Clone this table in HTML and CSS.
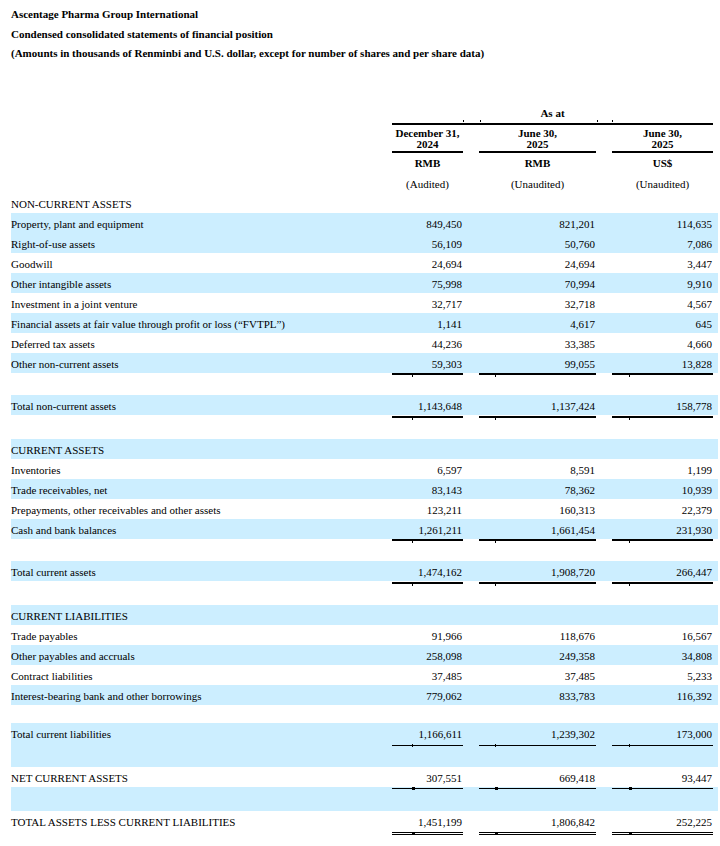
FILE: index.html
```html
<!DOCTYPE html>
<html lang="en">
<head>
<meta charset="utf-8">
<title>Condensed consolidated statements of financial position</title>
<link rel="stylesheet" href="styles.css">
</head>
<body>
<div class="page">
  <div class="title">Ascentage Pharma Group International</div>
  <div class="title">Condensed consolidated statements of financial position</div>
  <div class="title">(Amounts in thousands of Renminbi and U.S. dollar, except for number of shares and per share data)</div>

  <div class="table">
    <div class="grid hrow1"><div class="asat">As at</div></div>
    <div class="grid hrow2">
      <div class="hd c1">December 31,<br>2024</div>
      <div class="hd c2">June 30,<br>2025</div>
      <div class="hd c3">June 30,<br>2025</div>
    </div>
    <div class="grid hrow3">
      <div class="c1">RMB</div><div class="c2">RMB</div><div class="c3">US$</div>
    </div>
    <div class="grid hrow4">
      <div class="c1">(Audited)</div><div class="c2">(Unaudited)</div><div class="c3">(Unaudited)</div>
    </div>

    <div class="grid row"><span class="lbl">NON-CURRENT ASSETS</span></div>
    <div class="grid row b"><span class="lbl">Property, plant and equipment</span><span class="n1">849,450</span><span class="n2">821,201</span><span class="n3">114,635</span></div>
    <div class="grid row b"><span class="lbl">Right-of-use assets</span><span class="n1">56,109</span><span class="n2">50,760</span><span class="n3">7,086</span></div>
    <div class="grid row"><span class="lbl">Goodwill</span><span class="n1">24,694</span><span class="n2">24,694</span><span class="n3">3,447</span></div>
    <div class="grid row b"><span class="lbl">Other intangible assets</span><span class="n1">75,998</span><span class="n2">70,994</span><span class="n3">9,910</span></div>
    <div class="grid row"><span class="lbl">Investment in a joint venture</span><span class="n1">32,717</span><span class="n2">32,718</span><span class="n3">4,567</span></div>
    <div class="grid row b"><span class="lbl">Financial assets at fair value through profit or loss (“FVTPL”)</span><span class="n1">1,141</span><span class="n2">4,617</span><span class="n3">645</span></div>
    <div class="grid row"><span class="lbl">Deferred tax assets</span><span class="n1">44,236</span><span class="n2">33,385</span><span class="n3">4,660</span></div>
    <div class="grid row b"><span class="lbl">Other non-current assets</span><span class="n1">59,303</span><span class="n2">99,055</span><span class="n3">13,828</span></div>
    <div class="grid rule thick"><span class="r1"></span><span class="r2"></span><span class="r3"></span></div>
    <div class="spacer s20"></div>
    <div class="grid row b"><span class="lbl">Total non-current assets</span><span class="n1">1,143,648</span><span class="n2">1,137,424</span><span class="n3">158,778</span></div>
    <div class="grid rule thick gap1"><span class="r1"></span><span class="r2"></span><span class="r3"></span></div>
    <div class="spacer s21"></div>

    <div class="grid row b"><span class="lbl">CURRENT ASSETS</span></div>
    <div class="grid row"><span class="lbl">Inventories</span><span class="n1">6,597</span><span class="n2">8,591</span><span class="n3">1,199</span></div>
    <div class="grid row b"><span class="lbl">Trade receivables, net</span><span class="n1">83,143</span><span class="n2">78,362</span><span class="n3">10,939</span></div>
    <div class="grid row"><span class="lbl">Prepayments, other receivables and other assets</span><span class="n1">123,211</span><span class="n2">160,313</span><span class="n3">22,379</span></div>
    <div class="grid row b"><span class="lbl">Cash and bank balances</span><span class="n1">1,261,211</span><span class="n2">1,661,454</span><span class="n3">231,930</span></div>
    <div class="grid rule thick"><span class="r1"></span><span class="r2"></span><span class="r3"></span></div>
    <div class="spacer s20"></div>
    <div class="grid row b"><span class="lbl">Total current assets</span><span class="n1">1,474,162</span><span class="n2">1,908,720</span><span class="n3">266,447</span></div>
    <div class="grid rule thick gap1"><span class="r1"></span><span class="r2"></span><span class="r3"></span></div>
    <div class="spacer s21"></div>

    <div class="grid row b"><span class="lbl">CURRENT LIABILITIES</span></div>
    <div class="grid row"><span class="lbl">Trade payables</span><span class="n1">91,966</span><span class="n2">118,676</span><span class="n3">16,567</span></div>
    <div class="grid row b"><span class="lbl">Other payables and accruals</span><span class="n1">258,098</span><span class="n2">249,358</span><span class="n3">34,808</span></div>
    <div class="grid row"><span class="lbl">Contract liabilities</span><span class="n1">37,485</span><span class="n2">37,485</span><span class="n3">5,233</span></div>
    <div class="grid row b"><span class="lbl">Interest-bearing bank and other borrowings</span><span class="n1">779,062</span><span class="n2">833,783</span><span class="n3">116,392</span></div>
    <div class="spacer s18"></div>
    <div class="grid row b"><span class="lbl">Total current liabilities</span><span class="n1">1,166,611</span><span class="n2">1,239,302</span><span class="n3">173,000</span></div>
    <div class="grid rule thin band"><span class="r1"></span><span class="r2"></span><span class="r3"></span></div>
    <div class="grid row"><span class="lbl">NET CURRENT ASSETS</span><span class="n1">307,551</span><span class="n2">669,418</span><span class="n3">93,447</span></div>
    <div class="grid rule net band"><span class="r1"></span><span class="r2"></span><span class="r3"></span></div>
    <div class="grid row"><span class="lbl">TOTAL ASSETS LESS CURRENT LIABILITIES</span><span class="n1">1,451,199</span><span class="n2">1,806,842</span><span class="n3">252,225</span></div>
    <div class="grid rule dbl"><span class="r1"></span><span class="r2"></span><span class="r3"></span></div>
  </div>
</div>
</body>
</html>
```

FILE: styles.css
```css
html, body {
  margin: 0;
  padding: 0;
  background: #ffffff;
}

body {
  font-family: "Liberation Serif", "Times New Roman", serif;
  font-size: 11px;
  color: #000000;
}

.page {
  padding: 5px 0 0 11px;
  width: 707px;
}

.title {
  font-weight: bold;
  line-height: 19.5px;
  white-space: nowrap;
}

.table {
  margin-top: 36.5px;
}

.grid {
  display: grid;
  grid-template-columns: 381px 71px 16px 117px 16px 101px 5px;
}

/* header */
.hrow1 {
  height: 25px;
}
.asat {
  grid-column: 2 / 7;
  box-sizing: border-box;
  height: 25px;
  padding-top: 7px;
  line-height: 13px;
  text-align: center;
  font-weight: bold;
  border-bottom: 2px solid #000;
  position: relative;
}
.asat::after {
  content: "";
  position: absolute;
  left: 71px;
  bottom: 1px;
  width: 1px;
  height: 2px;
  background: #000;
  box-shadow: 17px 0 #000, 134px 0 #000, 149px 0 #000;
}

.c1 { grid-column: 2; text-align: center; }
.c2 { grid-column: 4; text-align: center; }
.c3 { grid-column: 6; text-align: center; }

.hrow2 {
  height: 28px;
}
.hd {
  box-sizing: border-box;
  height: 28px;
  padding-top: 2.5px;
  line-height: 11.5px;
  font-weight: bold;
  border-bottom: 2px solid #000;
}

.hrow3 {
  height: 20px;
  line-height: 20px;
  font-weight: bold;
}
.hrow4 {
  height: 20px;
  grid-template-rows: 20px;
  line-height: 23px;
}

/* body rows */
.row {
  height: 20px;
  grid-template-rows: 20px;
  line-height: 22px;
  white-space: nowrap;
}
.b, .band {
  background: #cceeff;
}
.lbl {
  grid-column: 1;
}
.n1, .n2, .n3 {
  text-align: right;
  padding-right: 1px;
}
.n1 { grid-column: 2; }
.n2 { grid-column: 4; }
.n3 { grid-column: 6; }

/* rules */
.rule {
  align-items: start;
}
.rule span {
  position: relative;
  background: #000;
}
.rule .r1 { grid-column: 2; }
.rule .r2 { grid-column: 4; }
.rule .r3 { grid-column: 6; }
.rule span::after {
  content: "";
  position: absolute;
  background: #000;
}
.rule .r1::after { left: 20px; }
.rule .r2::after { left: 16px; }
.rule .r3::after { left: 17px; }

.rule.thick {
  height: 2px;
  grid-template-rows: 2px;
}
.rule.thick span { height: 2px; }
.rule.thick span::after {
  top: 2px;
  width: 1px;
  height: 2px;
}
.rule.gap1 {
  margin-top: 1px;
}

.rule.thin {
  height: 24px;
  grid-template-rows: 24px;
}
.rule.thin span {
  height: 1px;
  margin-top: 2px;
}
.rule.thin span::after {
  top: -1px;
  width: 1px;
  height: 3px;
}

.rule.net {
  height: 24px;
  grid-template-rows: 24px;
}
.rule.net span {
  height: 1px;
  margin-top: 1px;
}
.rule.net span::after {
  top: -1px;
  width: 3px;
  height: 3px;
}

.rule.dbl {
  margin-top: 1px;
  height: 3px;
  grid-template-rows: 3px;
}
.rule.dbl span {
  height: 3px;
  box-sizing: border-box;
  background: transparent;
  border-top: 1px solid #000;
  border-bottom: 1px solid #000;
}
.rule.dbl span::after {
  top: -1px;
  width: 3px;
  height: 3px;
}

.spacer { height: 20px; }
.s18 { height: 18px; }
.s20 { height: 20px; }
.s21 { height: 21px; }
```
